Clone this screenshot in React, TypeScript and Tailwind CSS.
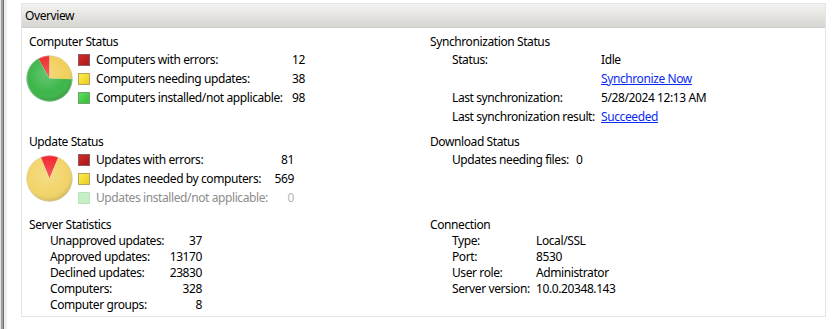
const font = { fontFamily: '"Noto Sans", "Open Sans", sans-serif' };

type Slice = { d: string; fill: string };

function Pie({ slices, id }: { slices: Slice[]; id: string }) {
  return (
    <svg width="47" height="47" viewBox="0 0 47 47" className="shrink-0">
      <defs>
        <radialGradient id={`${id}-shade`} cx="45%" cy="40%" r="60%">
          <stop offset="0%" stopColor="#ffffff" stopOpacity="0.22" />
          <stop offset="70%" stopColor="#ffffff" stopOpacity="0" />
          <stop offset="100%" stopColor="#000000" stopOpacity="0.14" />
        </radialGradient>
      </defs>
      {slices.map((s, i) => (
        <path key={i} d={s.d} fill={s.fill} />
      ))}
      <circle cx="23.5" cy="23.5" r="23" fill={`url(#${id}-shade)`} />
      <circle cx="23.5" cy="23.5" r="22.6" fill="none" stroke="#cfcfcf" strokeOpacity="0.6" strokeWidth="0.8" />
    </svg>
  );
}

function Swatch({ kind }: { kind: "red" | "yellow" | "green" | "faded" }) {
  const cls = {
    red: "border-[#8c5a5a] bg-gradient-to-br from-[#d42a2a] to-[#a81818]",
    yellow: "border-[#b3a35e] bg-gradient-to-br from-[#fbee4a] to-[#eccb22]",
    green: "border-[#6fa46f] bg-gradient-to-br from-[#5ee05e] to-[#34bb34]",
    faded: "border-[#bfe0bf] bg-[#c4f0c4]",
  }[kind];
  return <div className={`w-[12px] h-[12px] border shrink-0 ${cls}`} />;
}

function LegendRow({
  kind,
  label,
  value,
  labelW,
  valueW,
  faded,
}: {
  kind: "red" | "yellow" | "green" | "faded";
  label: string;
  value: string;
  labelW: string;
  valueW: string;
  faded?: boolean;
}) {
  return (
    <div className="flex items-center h-[19px]">
      <Swatch kind={kind} />
      <span className={`ml-[6px] shrink-0 ${labelW} ${faded ? "text-[#8c8c8c]" : "text-black"}`}>{label}</span>
      <span className={`${valueW} shrink-0 text-right ${faded ? "text-[#b4b4b4]" : "text-black"}`}>{value}</span>
    </div>
  );
}

function KV({ label, value, labelW, link, right, valueW }: { label: string; value: string; labelW: string; link?: boolean; right?: boolean; valueW?: string }) {
  return (
    <div className="flex items-center h-[16px]">
      <span className={`${labelW} shrink-0`}>{label}</span>
      <span className={`shrink-0 ${right ? `${valueW} text-right` : ""} ${link ? "text-[#0b2bf2] underline" : ""}`}>{value}</span>
    </div>
  );
}

export default function App() {
  return (
    <div className="w-[839px] h-[329px] bg-white flex text-[12px] tracking-[-0.4px] whitespace-nowrap text-black leading-[16px]" style={font}>
      {/* splitter at left edge */}
      <div className="w-[7px] h-full flex shrink-0">
        <div className="w-[1px] bg-[#e2e2e2]" />
        <div className="w-[2px] bg-[#a0a0a0]" />
        <div className="w-[1px] bg-[#6b6b6b]" />
        <div className="w-[3px] bg-[#f0f0f0]" />
      </div>

      <div className="ml-[14px] mt-[3px] w-[805px] h-[314px] border border-[#e4e4e4] flex flex-col">
        <div className="h-[24px] bg-gradient-to-b from-[#f4f3f1] to-[#d7d5d1] flex items-center pl-[3px] border-b border-[#d0cecb]">
          Overview
        </div>

        <div className="grid grid-cols-[404px_1fr] grid-rows-[100px_83px_96px] pt-[6px] pl-[4px]">
          {/* Computer Status */}
          <div>
            <div className="pl-[3px] h-[16px]">Computer Status</div>
            <div className="flex">
              <div className="pt-[5px]">
                <Pie
                  id="p1"
                  slices={[
                    { d: "M23.5 23.5 L12.35 3.38 A23 23 0 0 1 23.5 0.5 Z", fill: "#ee2a2a" },
                    { d: "M23.5 23.5 L23.5 0.5 A23 23 0 0 1 46.49 24.3 Z", fill: "#f1cf5a" },
                    { d: "M23.5 23.5 L46.49 24.3 A23 23 0 1 1 12.35 3.38 Z", fill: "#3cb64a" },
                  ]}
                />
              </div>
              <div className="ml-[5px]">
                <LegendRow kind="red" label="Computers with errors:" value="12" labelW="w-[191px]" valueW="w-[18px]" />
                <LegendRow kind="yellow" label="Computers needing updates:" value="38" labelW="w-[191px]" valueW="w-[18px]" />
                <LegendRow kind="green" label="Computers installed/not applicable:" value="98" labelW="w-[191px]" valueW="w-[18px]" />
              </div>
            </div>
          </div>

          {/* Synchronization Status */}
          <div>
            <div className="h-[16px]">Synchronization Status</div>
            <div className="pl-[22px] flex flex-col">
              <div className="h-[19px] flex items-center"><KV label="Status:" value="Idle" labelW="w-[149px]" /></div>
              <div className="h-[19px] flex items-center"><KV label="" value="Synchronize Now" labelW="w-[149px]" link /></div>
              <div className="h-[19px] flex items-center"><KV label="Last synchronization:" value="5/28/2024 12:13 AM" labelW="w-[149px]" /></div>
              <div className="h-[19px] flex items-center"><KV label="Last synchronization result:" value="Succeeded" labelW="w-[149px]" link /></div>
            </div>
          </div>

          {/* Update Status */}
          <div>
            <div className="pl-[3px] h-[16px]">Update Status</div>
            <div className="flex">
              <div className="pt-[5px]">
                <Pie
                  id="p2"
                  slices={[
                    { d: "M23.5 23.5 L14.74 2.24 A23 23 0 0 1 32.26 2.24 Z", fill: "#f2222c" },
                    { d: "M23.5 23.5 L32.26 2.24 A23 23 0 1 1 14.74 2.24 Z", fill: "#f2d468" },
                  ]}
                />
              </div>
              <div className="ml-[5px]">
                <LegendRow kind="red" label="Updates with errors:" value="81" labelW="w-[172px]" valueW="w-[26px]" />
                <LegendRow kind="yellow" label="Updates needed by computers:" value="569" labelW="w-[172px]" valueW="w-[26px]" />
                <LegendRow kind="faded" label="Updates installed/not applicable:" value="0" labelW="w-[172px]" valueW="w-[26px]" faded />
              </div>
            </div>
          </div>

          {/* Download Status */}
          <div>
            <div className="h-[16px]">Download Status</div>
            <div className="pl-[22px] h-[19px] flex items-center">
              <KV label="Updates needing files:" value="0" labelW="w-[124px]" />
            </div>
          </div>

          {/* Server Statistics */}
          <div>
            <div className="pl-[3px] h-[16px]">Server Statistics</div>
            <div className="pl-[24px]">
              <KV label="Unapproved updates:" value="37" labelW="w-[118px]" right valueW="w-[34px]" />
              <KV label="Approved updates:" value="13170" labelW="w-[118px]" right valueW="w-[34px]" />
              <KV label="Declined updates:" value="23830" labelW="w-[118px]" right valueW="w-[34px]" />
              <KV label="Computers:" value="328" labelW="w-[118px]" right valueW="w-[34px]" />
              <KV label="Computer groups:" value="8" labelW="w-[118px]" right valueW="w-[34px]" />
            </div>
          </div>

          {/* Connection */}
          <div>
            <div className="h-[16px]">Connection</div>
            <div className="pl-[22px]">
              <KV label="Type:" value="Local/SSL" labelW="w-[84px]" />
              <KV label="Port:" value="8530" labelW="w-[84px]" />
              <KV label="User role:" value="Administrator" labelW="w-[84px]" />
              <KV label="Server version:" value="10.0.20348.143" labelW="w-[84px]" />
            </div>
          </div>
        </div>
      </div>
    </div>
  );
}
